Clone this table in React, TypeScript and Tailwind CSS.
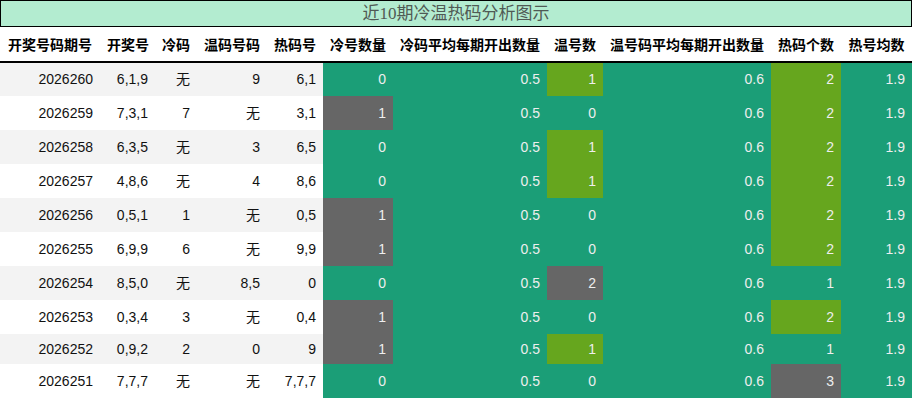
import React from 'react';

type Cell = { v: string; bg?: 'gray' | 'green' };

interface Row {
  issue: string;
  nums: string;
  cold: string;
  warm: string;
  hot: string;
  coldCount: Cell;
  coldAvg: string;
  warmCount: Cell;
  warmAvg: string;
  hotCount: Cell;
  hotAvg: string;
  h?: string;
}

const rows: Row[] = [
  { issue: '2026260', nums: '6,1,9', cold: '无', warm: '9', hot: '6,1', coldCount: { v: '0' }, coldAvg: '0.5', warmCount: { v: '1', bg: 'green' }, warmAvg: '0.6', hotCount: { v: '2', bg: 'green' }, hotAvg: '1.9' },
  { issue: '2026259', nums: '7,3,1', cold: '7', warm: '无', hot: '3,1', coldCount: { v: '1', bg: 'gray' }, coldAvg: '0.5', warmCount: { v: '0' }, warmAvg: '0.6', hotCount: { v: '2', bg: 'green' }, hotAvg: '1.9' },
  { issue: '2026258', nums: '6,3,5', cold: '无', warm: '3', hot: '6,5', coldCount: { v: '0' }, coldAvg: '0.5', warmCount: { v: '1', bg: 'green' }, warmAvg: '0.6', hotCount: { v: '2', bg: 'green' }, hotAvg: '1.9' },
  { issue: '2026257', nums: '4,8,6', cold: '无', warm: '4', hot: '8,6', coldCount: { v: '0' }, coldAvg: '0.5', warmCount: { v: '1', bg: 'green' }, warmAvg: '0.6', hotCount: { v: '2', bg: 'green' }, hotAvg: '1.9' },
  { issue: '2026256', nums: '0,5,1', cold: '1', warm: '无', hot: '0,5', coldCount: { v: '1', bg: 'gray' }, coldAvg: '0.5', warmCount: { v: '0' }, warmAvg: '0.6', hotCount: { v: '2', bg: 'green' }, hotAvg: '1.9' },
  { issue: '2026255', nums: '6,9,9', cold: '6', warm: '无', hot: '9,9', coldCount: { v: '1', bg: 'gray' }, coldAvg: '0.5', warmCount: { v: '0' }, warmAvg: '0.6', hotCount: { v: '2', bg: 'green' }, hotAvg: '1.9' },
  { issue: '2026254', nums: '8,5,0', cold: '无', warm: '8,5', hot: '0', coldCount: { v: '0' }, coldAvg: '0.5', warmCount: { v: '2', bg: 'gray' }, warmAvg: '0.6', hotCount: { v: '1' }, hotAvg: '1.9' },
  { issue: '2026253', nums: '0,3,4', cold: '3', warm: '无', hot: '0,4', coldCount: { v: '1', bg: 'gray' }, coldAvg: '0.5', warmCount: { v: '0' }, warmAvg: '0.6', hotCount: { v: '2', bg: 'green' }, hotAvg: '1.9' },
  { issue: '2026252', nums: '0,9,2', cold: '2', warm: '0', hot: '9', coldCount: { v: '1', bg: 'gray' }, coldAvg: '0.5', warmCount: { v: '1', bg: 'green' }, warmAvg: '0.6', hotCount: { v: '1' }, hotAvg: '1.9', h: 'h-[30px]' },
  { issue: '2026251', nums: '7,7,7', cold: '无', warm: '无', hot: '7,7,7', coldCount: { v: '0' }, coldAvg: '0.5', warmCount: { v: '0' }, warmAvg: '0.6', hotCount: { v: '3', bg: 'gray' }, hotAvg: '1.9' },
];

const headers = ['开奖号码期号', '开奖号', '冷码', '温码号码', '热码号', '冷号数量', '冷码平均每期开出数量', '温号数', '温号码平均每期开出数量', '热码个数', '热号均数'];
const widths = ['w-[100px]', 'w-[55px]', 'w-[42px]', 'w-[70px]', 'w-[56px]', 'w-[70px]', 'w-[154px]', 'w-[56px]', 'w-[168px]', 'w-[70px]', 'w-[71px]'];

const bgClass = (c: Cell) =>
  c.bg === 'gray' ? 'bg-[#666666]' : c.bg === 'green' ? 'bg-[#66a61e]' : '';

export default function App() {
  return (
    <div className="w-[912px] h-[400px] overflow-hidden bg-white font-['Liberation_Sans','Noto_Sans_CJK_SC',sans-serif]">
      <div className="h-[27px] border border-black bg-[#b3ecd0] flex items-center justify-center text-[17px] leading-none text-[#505a55] font-['Liberation_Serif','Noto_Sans_CJK_SC',serif]">
        近10期冷温热码分析图示
      </div>
      <table className="table-fixed border-collapse w-[912px] text-[14px]">
        <colgroup>
          {widths.map((w, i) => (
            <col key={i} className={w} />
          ))}
        </colgroup>
        <thead>
          <tr className="h-[35px] border-b-2 border-black">
            {headers.map((h) => (
              <th key={h} className="px-[7px] text-center font-bold text-black whitespace-nowrap font-['Noto_Sans_CJK_SC',sans-serif]">
                {h}
              </th>
            ))}
          </tr>
        </thead>
        <tbody>
          {rows.map((r, i) => {
            const stripe = i % 2 === 0 ? 'bg-[#f3f3f3]' : 'bg-white';
            const left = `${stripe} px-[7px] text-right text-[#111111]`;
            const right = 'px-[7px] text-right text-[#eeeeee]';
            return (
              <tr key={r.issue} className={`${r.h ?? 'h-[34px]'} bg-[#1b9e77]`}>
                <td className={left}>{r.issue}</td>
                <td className={left}>{r.nums}</td>
                <td className={left}>{r.cold}</td>
                <td className={left}>{r.warm}</td>
                <td className={left}>{r.hot}</td>
                <td className={`${right} ${bgClass(r.coldCount)}`}>{r.coldCount.v}</td>
                <td className={right}>{r.coldAvg}</td>
                <td className={`${right} ${bgClass(r.warmCount)}`}>{r.warmCount.v}</td>
                <td className={right}>{r.warmAvg}</td>
                <td className={`${right} ${bgClass(r.hotCount)}`}>{r.hotCount.v}</td>
                <td className={right}>{r.hotAvg}</td>
              </tr>
            );
          })}
        </tbody>
      </table>
    </div>
  );
}
